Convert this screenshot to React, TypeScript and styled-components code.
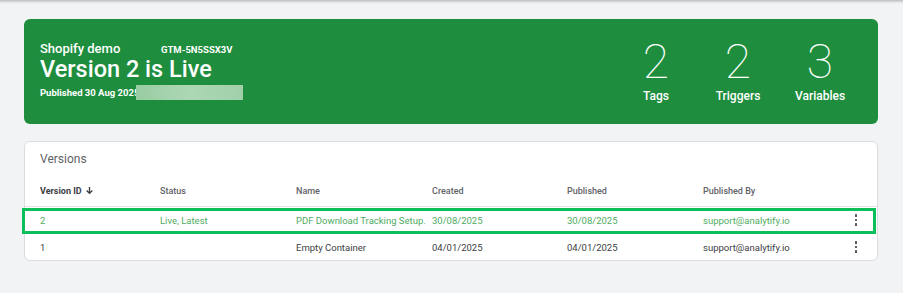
import styled, { createGlobalStyle } from 'styled-components';

const GlobalStyle = createGlobalStyle`
  body {
    margin: 0;
    background: #f1f3f4;
    font-family: Roboto, "Liberation Sans", Arial, sans-serif;
  }
`

const Page = styled.div`
  width: 903px;
  height: 293px;
  background: #f1f3f4;
  overflow: hidden;
`

const TopShadow = styled.div`
  height: 4px;
  background: linear-gradient(#bdbdbd, #e6e7e8 60%, #f1f3f4);
`

const Content = styled.div`
  padding: 15px 25px 0 24px;
  display: flex;
  flex-direction: column;
  gap: 17px;
`

const Hero = styled.section`
  height: 105px;
  box-sizing: border-box;
  background: #1e8e3e;
  border-radius: 6px;
  color: #fff;
  display: flex;
  align-items: center;
  justify-content: space-between;
  padding: 0 17px 0 16px;
`

const HeroInfo = styled.div`
  display: flex;
  flex-direction: column;
  margin-top: -3px;
`

const ContainerLine = styled.div`
  display: flex;
  align-items: baseline;
`

const ContainerName = styled.span`
  font-size: 13px;
  font-weight: 500;
  width: 121px;
`

const ContainerId = styled.span`
  font-size: 9.5px;
  font-weight: 700;
`

const LiveTitle = styled.h1`
  margin: 0;
  font-size: 23.5px;
  font-weight: 500;
  line-height: 26px;
`

const PublishedLine = styled.div`
  display: flex;
  align-items: center;
  margin-top: 3px;
  font-size: 9.5px;
  font-weight: 700;
`

const Blurred = styled.span`
  display: inline-block;
  width: 107px;
  height: 15px;
  margin-left: -3px;
  background: linear-gradient(90deg, #98cca2, #acd8b4 50%, #a0d0a9);
`

const Stats = styled.div`
  display: flex;
  align-self: flex-start;
  margin-top: 19px;
`

const Stat = styled.div`
  width: 82px;
  display: flex;
  flex-direction: column;
  align-items: center;
`

const StatValue = styled.span`
  font-size: 48px;
  font-weight: 100;
  line-height: 48px;
`

const StatLabel = styled.span`
  font-size: 12px;
  font-weight: 500;
  margin-top: 3px;
`

const Card = styled.section`
  background: #fff;
  border: 1px solid #dadce0;
  border-radius: 6px;
  height: 120px;
  box-sizing: border-box;
`

const CardTitle = styled.div`
  height: 33px;
  padding: 10px 15px 0;
  box-sizing: border-box;
  font-size: 12px;
  color: #5f6368;
`

const Row = styled.div<{ $header?: boolean; $live?: boolean }>`
  position: relative;
  display: grid;
  grid-template-columns: 120px 136px 136px 135px 136px 1fr 24px;
  align-items: center;
  height: ${p => (p.$header ? 31 : 26)}px;
  padding: 0 9px 0 15px;
  border-bottom: ${p => (p.$header || p.$live ? '1px solid #e3e4e6' : 'none')};
  font-size: ${p => (p.$header ? 9 : 9.5)}px;
  font-weight: ${p => (p.$header ? 500 : 400)};
  white-space: nowrap;
  color: ${p => (p.$header ? '#5f6368' : p.$live ? '#4fab62' : '#3c4043')};

  ${p => p.$live && `
    &::after {
      content: '';
      position: absolute;
      left: -3px;
      right: 1px;
      top: 1px;
      bottom: -1px;
      border: 3px solid #0bc05a;
    }
  `}
`

const HeaderCell = styled.span<{ $strong?: boolean }>`
  display: flex;
  align-items: center;
  gap: 3px;
  color: ${p => (p.$strong ? '#3c4043' : '#5f6368')};
  font-weight: ${p => (p.$strong ? 700 : 500)};
`

const Kebab = styled.span`
  display: flex;
  flex-direction: column;
  align-items: center;
  gap: 2px;
  span {
    width: 2.5px;
    height: 2.5px;
    background: #55595e;
    border-radius: 0.5px;
  }
`

const MoreButton = () => (
  <Kebab>
    <span />
    <span />
    <span />
  </Kebab>
)

const versions = [
  { id: '2', status: 'Live, Latest', name: 'PDF Download Tracking Setup.', created: '30/08/2025', published: '30/08/2025', by: 'support@analytify.io', live: true },
  { id: '1', status: '', name: 'Empty Container', created: '04/01/2025', published: '04/01/2025', by: 'support@analytify.io', live: false },
]

const stats = [
  { value: 2, label: 'Tags' },
  { value: 2, label: 'Triggers' },
  { value: 3, label: 'Variables' },
]

export default function App() {
  return (
    <Page>
      <GlobalStyle />
      <TopShadow />
      <Content>
        <Hero>
          <HeroInfo>
            <ContainerLine>
              <ContainerName>Shopify demo</ContainerName>
              <ContainerId>GTM-5N5SSX3V</ContainerId>
            </ContainerLine>
            <LiveTitle>Version 2 is Live</LiveTitle>
            <PublishedLine>
              Published 30 Aug 2025
              <Blurred />
            </PublishedLine>
          </HeroInfo>
          <Stats>
            {stats.map(s => (
              <Stat key={s.label}>
                <StatValue>{s.value}</StatValue>
                <StatLabel>{s.label}</StatLabel>
              </Stat>
            ))}
          </Stats>
        </Hero>

        <Card>
          <CardTitle>Versions</CardTitle>
          <Row $header>
            <HeaderCell $strong>
              Version ID
              <svg width="9" height="9" viewBox="0 0 10 10">
                <path d="M5 1v7M1.8 5l3.2 3.2L8.2 5" fill="none" stroke="#3c4043" strokeWidth="1.5" />
              </svg>
            </HeaderCell>
            <HeaderCell>Status</HeaderCell>
            <HeaderCell>Name</HeaderCell>
            <HeaderCell>Created</HeaderCell>
            <HeaderCell>Published</HeaderCell>
            <HeaderCell>Published By</HeaderCell>
            <span />
          </Row>
          {versions.map(v => (
            <Row key={v.id} $live={v.live}>
              <span>{v.id}</span>
              <span>{v.status}</span>
              <span>{v.name}</span>
              <span>{v.created}</span>
              <span>{v.published}</span>
              <span>{v.by}</span>
              <MoreButton />
            </Row>
          ))}
        </Card>
      </Content>
    </Page>
  )
}
